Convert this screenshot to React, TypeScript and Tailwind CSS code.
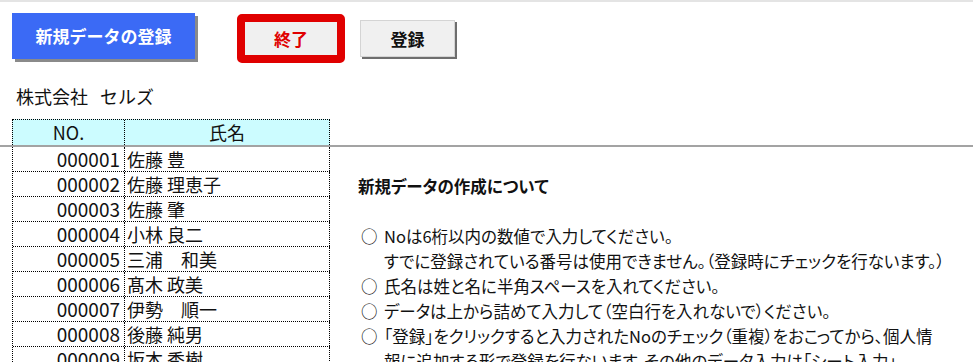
import React from 'react';

const rows = [
  { no: '000001', name: '佐藤 豊' },
  { no: '000002', name: '佐藤 理恵子' },
  { no: '000003', name: '佐藤 肇' },
  { no: '000004', name: '小林 良二' },
  { no: '000005', name: '三浦　和美' },
  { no: '000006', name: '髙木 政美' },
  { no: '000007', name: '伊勢　順一' },
  { no: '000008', name: '後藤 純男' },
  { no: '000009', name: '坂本 秀樹' },
];

// 右側の説明文（行ごと）
const notes: { mark: boolean; text: string }[] = [
  { mark: true, text: 'Noは6桁以内の数値で入力してください。' },
  { mark: false, text: 'すでに登録されている番号は使用できません。（登録時にチェックを行ないます。）' },
  { mark: true, text: '氏名は姓と名に半角スペースを入れてください。' },
  { mark: true, text: 'データは上から詰めて入力して（空白行を入れないで）ください。' },
  { mark: true, text: '「登録」をクリックすると入力されたNoのチェック（重複）をおこってから、個人情' },
  { mark: false, text: '報に追加する形で登録を行ないます。その他のデータ入力は「シート入力」' },
];

const App: React.FC = () => {
  return (
    <div className="w-[973px] h-[362px] overflow-hidden bg-white text-[#111] font-['Noto_Sans_CJK_JP','Noto_Sans',sans-serif]">
      <div className="h-[2px] bg-[#e4e4e4]" />

      {/* ボタン */}
      <div className="flex items-start h-[63px]">
        <button className="ml-[12px] mt-[11px] w-[183px] h-[46px] bg-[#3b6af5] text-white font-bold text-[17px] shadow-[3px_3px_0_#8a8a8a] flex items-center justify-center">
          新規データの登録
        </button>
        <button className="ml-[42px] mt-[12px] w-[108px] h-[49px] border-[8px] border-[#e00000] rounded-[5px] bg-[#f0f0f0] text-[#e00000] font-bold text-[17px] flex items-center justify-center">
          終了
        </button>
        <button className="ml-[15px] mt-[18px] w-[95px] h-[37px] border border-[#d4d4d4] bg-[#f0f0f0] shadow-[2px_2px_0_#6e6e6e] font-bold text-[17px] flex items-center justify-center">
          登録
        </button>
      </div>

      <div className="h-[54px] pt-[19px] pl-[16px] text-[18px] leading-[25px]">
        株式会社<span className="ml-[12px]">セルズ</span>
      </div>

      {/* 見出し行 */}
      <div className="flex">
        <div className="ml-[12px] flex border-t border-l border-dotted border-black bg-[#ccfcff] h-[26px] text-[18px] leading-[25px]">
          <div className="w-[112px] border-r border-dotted border-black text-center">NO.</div>
          <div className="w-[205px] border-r border-dotted border-black text-center">氏名</div>
        </div>
      </div>
      <div className="h-[2px] bg-[#a3a3a3]" />

      <div className="flex">
        <div className="ml-[12px] border-l border-dotted border-black">
          {rows.map(r => (
            <div key={r.no} className="flex h-[25px] border-b border-dotted border-black text-[18px] leading-[24px]">
              <div className="w-[112px] border-r border-dotted border-black text-right pr-[4px] text-[19px]">{r.no}</div>
              <div className="w-[205px] border-r border-dotted border-black pl-[2px] whitespace-pre">{r.name}</div>
            </div>
          ))}
        </div>

        <div className="ml-[28px] pt-[2px] text-[16.5px] leading-[25px] whitespace-nowrap [font-feature-settings:'palt']">
          <div className="h-[25px]" />
          <div className="h-[25px] font-bold">新規データの作成について</div>
          <div className="h-[25px]" />
          {notes.map((n, i) => (
            <div key={i} className="flex h-[25px]">
              <span className="w-[26px] pl-[3px]">{n.mark ? '○' : ''}</span>
              <span>{n.text}</span>
            </div>
          ))}
        </div>
      </div>
    </div>
  );
};

export default App;
